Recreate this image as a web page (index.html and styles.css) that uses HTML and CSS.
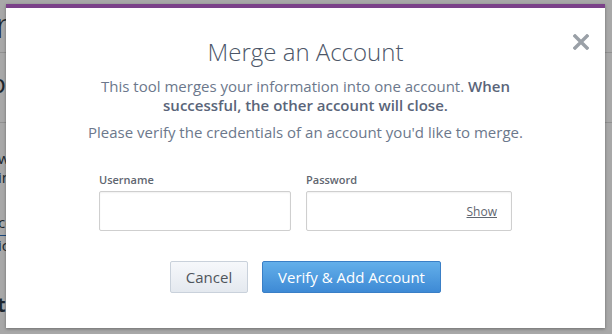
FILE: index.html
```html
<!DOCTYPE html>
<html lang="en">
<head>
    <meta charset="UTF-8">
    <title>Merge an Account</title>
    <link rel="stylesheet" href="styles.css">
</head>
<body>

    <!-- page behind the dialog -->
    <div class="page">
        <div class="page-head">
            <h1 class="page-title">rewards</h1>
        </div>
        <div class="page-sub">
            <span class="page-sub-text">p</span>
        </div>
        <div class="page-body">
            <p class="page-line first">when</p>
            <p class="page-line">in</p>
            <p class="page-line gap">co</p>
            <p class="page-link">&nbsp;&nbsp;&nbsp;</p>
            <p class="page-line">ic</p>
            <p class="page-strong">to</p>
        </div>
    </div>

    <div class="overlay">
        <div class="modal">
            <button class="modal-close" type="button" aria-label="Close">
                <svg width="16" height="16" viewBox="0 0 16 16">
                    <path d="M2 2 L14 14 M14 2 L2 14" stroke="#9aa0a7" stroke-width="3.4" stroke-linecap="square" fill="none"/>
                </svg>
            </button>

            <h2 class="modal-title">Merge an Account</h2>
            <p class="modal-intro">This tool merges your information into one account. <strong>When successful, the other account will close.</strong></p>
            <p class="modal-intro second">Please verify the credentials of an account you'd like to merge.</p>

            <form class="merge-form">
                <div class="field">
                    <label class="field-label" for="username">Username</label>
                    <input class="field-input" id="username" type="text">
                </div>
                <div class="field password">
                    <label class="field-label" for="password">Password</label>
                    <div class="field-input with-toggle">
                        <input class="bare-input" id="password" type="password">
                        <a href="#" class="show-toggle">Show</a>
                    </div>
                </div>
            </form>

            <div class="modal-actions">
                <button class="btn btn-cancel" type="button">Cancel</button>
                <button class="btn btn-primary" type="button">Verify &amp; Add Account</button>
            </div>
        </div>
    </div>

</body>
</html>
```

FILE: styles.css
```css
/* ---------- base ---------- */
body {
    margin: 0;
    padding: 0;
    font-family: "Open Sans", "DejaVu Sans", sans-serif;
    background-color: #fff;
    width: 612px;
    height: 334px;
    overflow: hidden;
    position: relative;
}

/* ---------- page behind the dialog ---------- */
.page {
    color: #2e3a46;
}

.page-head {
    height: 52px;
    border-bottom: 1px solid #ddd;
}

.page-title {
    margin: 0 0 0 -4px;
    font-size: 34px;
    font-weight: 300;
    line-height: 50px;
}

.page-sub {
    height: 69px;
    border-bottom: 1px solid #ddd;
}

.page-sub-text {
    display: block;
    font-size: 26px;
    line-height: 60px;
    margin-left: -10px;
}

.page-body {
    padding-top: 26px;
    font-size: 15px;
}

.page-line {
    margin: 0 0 0 -2px;
    line-height: 19px;
}

.page-line.gap {
    margin-top: 26px;
}

.page-link {
    margin: 0;
    width: 10px;
    height: 3px;
    border-bottom: 1px solid #2a6ebb;
    line-height: 0;
}

.page-strong {
    margin: 40px 0 0 -3px;
    font-weight: 700;
    font-size: 20px;
    line-height: 20px;
}

/* ---------- overlay ---------- */
.overlay {
    position: absolute;
    top: 0;
    left: 0;
    right: 0;
    bottom: 0;
    background-color: rgba(0, 0, 0, 0.34);
}

.modal {
    position: relative;
    width: 599px;
    height: 320px;
    margin: 4px 0 0 6px;
    background-color: #fff;
    border-top: 4px solid #7b4189;
    box-shadow: 0 1px 3px rgba(0, 0, 0, 0.35);
    text-align: center;
}

.modal-close {
    position: absolute;
    top: 26px;
    right: 16px;
    padding: 0;
    border: 0;
    background: none;
    width: 16px;
    height: 16px;
    cursor: pointer;
}

.modal-close svg {
    display: block;
}

.modal-title {
    margin: 0;
    padding-top: 28px;
    font-size: 24px;
    font-weight: 300;
    line-height: 32px;
    color: #4c5668;
}

.modal-intro {
    margin: 9px auto 0;
    width: 440px;
    font-size: 15px;
    line-height: 19px;
    color: #6c788c;
}

.modal-intro strong {
    font-weight: 600;
    color: #5a6579;
}

.modal-intro.second {
    width: auto;
    margin-top: 8px;
}

/* ---------- form ---------- */
.merge-form {
    display: grid;
    grid-template-columns: 192px 206px;
    column-gap: 15px;
    justify-content: center;
    margin-top: 30px;
    text-align: left;
}

.field-label {
    display: block;
    font-size: 11px;
    font-weight: 600;
    line-height: 15px;
    color: #5f6670;
    margin-bottom: 4px;
}

.field-input {
    display: block;
    width: 100%;
    height: 40px;
    box-sizing: border-box;
    border: 1px solid #cfcfcf;
    border-radius: 2px;
    box-shadow: inset 0 1px 2px rgba(0, 0, 0, 0.06);
    background: #fff;
    font-family: inherit;
    font-size: 14px;
    padding: 0 10px;
    margin: 0;
}

.field-input.with-toggle {
    display: flex;
    align-items: center;
    padding: 0 14px 0 10px;
}

.bare-input {
    flex: 1;
    min-width: 0;
    border: 0;
    outline: none;
    background: transparent;
    font-family: inherit;
    font-size: 14px;
    padding: 0;
}

.show-toggle {
    font-size: 12px;
    color: #5f6670;
    text-decoration: underline;
}

/* ---------- buttons ---------- */
.modal-actions {
    display: flex;
    justify-content: center;
    gap: 14px;
    margin-top: 30px;
}

.btn {
    height: 32px;
    box-sizing: border-box;
    border-radius: 2px;
    font-family: inherit;
    font-size: 15px;
    line-height: 30px;
    padding: 0;
    cursor: pointer;
}

.btn-cancel {
    width: 78px;
    color: #4f555c;
    background: linear-gradient(to bottom, #f6f8fb, #e4e9ef);
    border: 1px solid #c9d1db;
}

.btn-primary {
    width: 179px;
    color: #fff;
    background: linear-gradient(to bottom, #63afea, #3e8ad5);
    border: 1px solid #3a7fc6;
}
```
